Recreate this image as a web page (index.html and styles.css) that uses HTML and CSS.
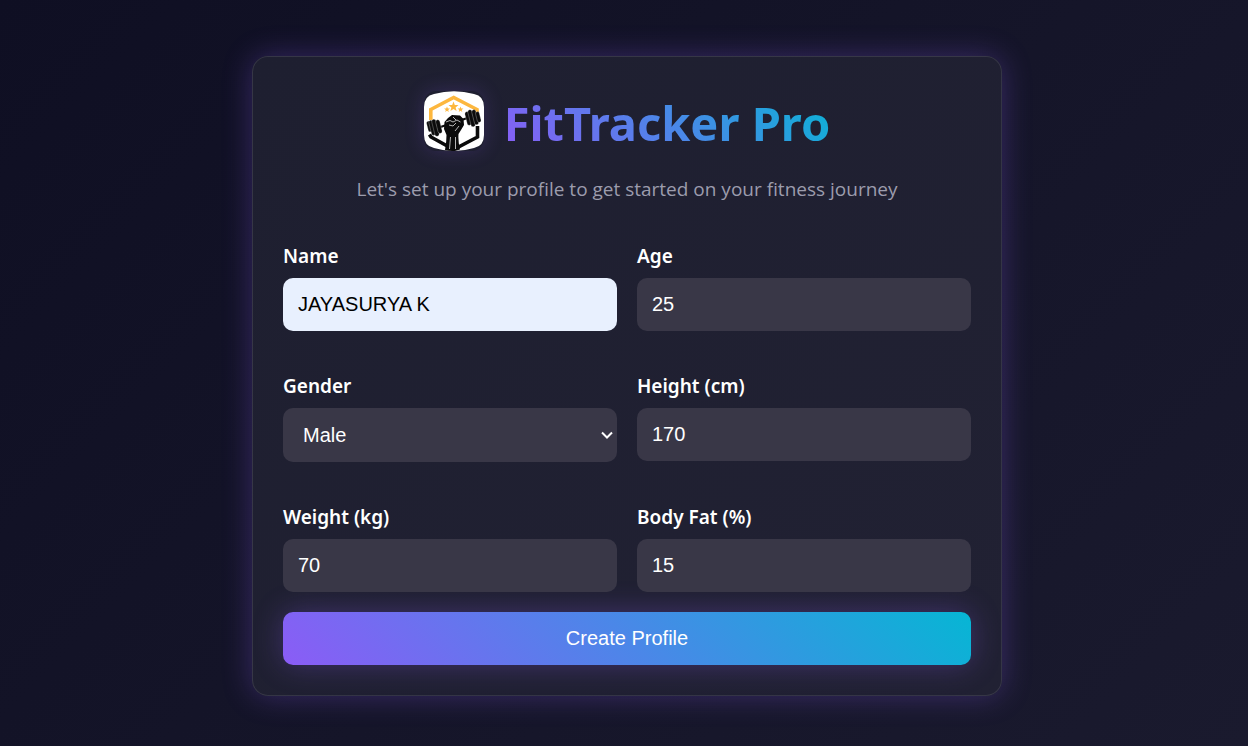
FILE: index.html
```html
<!DOCTYPE html>
<html lang="en">
<head>
<meta charset="utf-8">
<meta name="viewport" content="width=device-width, initial-scale=1">
<title>FitTracker Pro</title>
<link rel="stylesheet" href="styles.css">
</head>
<body>
<main class="card">
  <header class="header">
    <div class="brand">
      <svg class="logo" viewBox="0 0 60 60" role="img" aria-label="FitTracker Pro logo">
        <path d="M0 16Q0 5 10 3Q30-2.500 50 3Q60 5 60 16V44Q60 55 50 57Q30 63 10 57Q0 55 0 44Z" fill="#fff"/>
        <path d="M6.800 29V18.500L29.700 6.500L53 18.500V22" fill="none" stroke="#fdb73e" stroke-width="3.600"/>
        <path d="M5.500 43.500L7 46L29.700 58.500L53.500 46V35" fill="none" stroke="#0b0b0b" stroke-width="3.600"/>
        <g fill="#fdb73e">
          <path d="M29.500 10.500l1.300 3.500 3.700.1-2.900 2.300 1 3.600-3.100-2.100-3.100 2.100 1-3.600-2.900-2.300 3.700-.1z"/>
          <path d="M23 15.500l.8 2 2.100.1-1.700 1.300.6 2.100-1.800-1.200-1.800 1.200.6-2.100-1.700-1.300 2.100-.1z"/>
          <path d="M36.500 15.500l.8 2 2.100.1-1.700 1.300.6 2.100-1.800-1.200-1.800 1.200.6-2.100-1.700-1.300 2.100-.1z"/>
        </g>
        <path d="M15 36.500L45 26.500" stroke="#0b0b0b" stroke-width="2.200"/>
        <g fill="#0b0b0b" stroke="#fff" stroke-width=".25">
          <rect x="3.500" y="30" width="3.800" height="11" rx="1.900" transform="rotate(-14 5.400 36)"/>
          <rect x="6.200" y="29" width="4.200" height="15.500" rx="2.100" transform="rotate(-14 8.300 37)"/>
          <rect x="9.300" y="28" width="4.400" height="17.500" rx="2.200" transform="rotate(-14 11.500 37)"/>
          <rect x="12.800" y="28.500" width="4.200" height="14" rx="2.100" transform="rotate(-14 15 35.500)"/>
          <rect x="42" y="20.500" width="4.200" height="14" rx="2.100" transform="rotate(-14 44 27.500)"/>
          <rect x="45.300" y="18.500" width="4.400" height="17.500" rx="2.200" transform="rotate(-14 47.500 27)"/>
          <rect x="49" y="18.500" width="4.200" height="15.500" rx="2.100" transform="rotate(-14 51 26)"/>
          <rect x="52.400" y="20.500" width="3.800" height="11" rx="1.900" transform="rotate(-14 54.300 26)"/>
        </g>
        <path d="M21 59Q22.500 51 22.500 44L20 38L20.500 31L24 27L28 24L36 24.500L39.500 28L40 34L37 39L34.500 43Q34 51 36 58.500Q30 61 21 59Z" fill="#0b0b0b"/>
        <path d="M22 31L26 29.500L29 31L33 29L36.500 31M29 26L32 29M25 34L29 35L32 32M26.500 46L25.500 58M31.500 46V58M35 35L31 40" fill="none" stroke="#fff" stroke-width=".7"/>
      </svg>
      <h1 class="title">FitTracker Pro</h1>
    </div>
    <p class="subtitle">Let's set up your profile to get started on your fitness journey</p>
  </header>
  <form class="form">
    <div class="fields">
      <div class="field"><label for="name">Name</label><input class="control autofilled" id="name" type="text" value="JAYASURYA K"></div>
      <div class="field"><label for="age">Age</label><input class="control" id="age" type="text" inputmode="numeric" value="25"></div>
      <div class="field"><label for="gender">Gender</label><select class="control select" id="gender"><option>Male</option><option>Female</option></select></div>
      <div class="field"><label for="height">Height (cm)</label><input class="control" id="height" type="text" inputmode="numeric" value="170"></div>
      <div class="field"><label for="weight">Weight (kg)</label><input class="control" id="weight" type="text" inputmode="numeric" value="70"></div>
      <div class="field"><label for="fat">Body Fat (%)</label><input class="control" id="fat" type="text" inputmode="numeric" value="15"></div>
    </div>
    <button class="submit" type="button">Create Profile</button>
  </form>
</main>
</body>
</html>
```
FILE: styles.css
```css
* { box-sizing: border-box; }

body {
  margin: 0;
  min-height: 100vh;
  padding: 56px 20px 50px 26px;
  background: linear-gradient(135deg, #0f0f23, #1a1a2e) fixed;
  color: #fff;
  font-family: "Segoe UI", "Noto Sans", sans-serif;
}

.card {
  max-width: 750px;
  margin: 0 auto;
  padding: 30px;
  border: 1px solid rgba(255, 255, 255, 0.1);
  border-radius: 16px;
  background: linear-gradient(135deg, #1e1f30, #212133);
  box-shadow: 0 0 30px rgba(139, 92, 246, 0.3);
}

.header { text-align: center; }

.brand {
  display: flex;
  align-items: center;
  justify-content: center;
  gap: 20px;
  height: 68px;
}

.logo {
  width: 60px;
  height: 60px;
  border-radius: 12px;
  box-shadow: 0 0 20px rgba(139, 92, 246, 0.2);
}

.title {
  margin: 0;
  padding-top: 4px;
  font-size: 47px;
  line-height: 68px;
  background: linear-gradient(45deg, #8b5cf6, #4b87e8 50%, #06b6d4);
  background-clip: text;
  -webkit-background-clip: text;
  color: transparent;
}

.subtitle {
  margin: 20px 0 0;
  color: #9c9cad;
  font-family: "Segoe UI", "Open Sans", sans-serif;
  font-size: 19px;
  line-height: 28px;
}

.form { margin-top: 40px; }

.fields {
  display: grid;
  grid-template-columns: 1fr 1fr;
  gap: 42px 20px;
}

.field {
  display: flex;
  flex-direction: column;
  gap: 8px;
}

.field label {
  font-size: 19px;
  font-weight: 600;
  line-height: 27px;
}

.control {
  width: 100%;
  height: 53px;
  padding: 0 15px;
  border: 0;
  border-radius: 10px;
  background: #393747;
  color: #fff;
  font-family: "Liberation Sans", Arial, sans-serif;
  font-size: 20px;
}

.select {
  height: 54px;
  padding: 0 30px 0 20px;
  appearance: none;
  background: #393747 url("data:image/svg+xml,%3Csvg xmlns='http://www.w3.org/2000/svg' width='12' height='8'%3E%3Cpath d='M1 1.500L6 6.500L11 1.500' fill='none' stroke='white' stroke-width='2'/%3E%3C/svg%3E") no-repeat right 4px center;
}

.autofilled { background: #e8f0fe; color: #000; }

.submit {
  display: block;
  width: 100%;
  height: 53px;
  margin-top: 20px;
  border: 0;
  border-radius: 10px;
  background: linear-gradient(45deg, #8b5cf6, #4b87e8 50%, #06b6d4);
  box-shadow: 0 0 30px rgba(139, 92, 246, 0.3);
  color: #fff;
  font-family: "Liberation Sans", Arial, sans-serif;
  font-size: 20px;
}
```
